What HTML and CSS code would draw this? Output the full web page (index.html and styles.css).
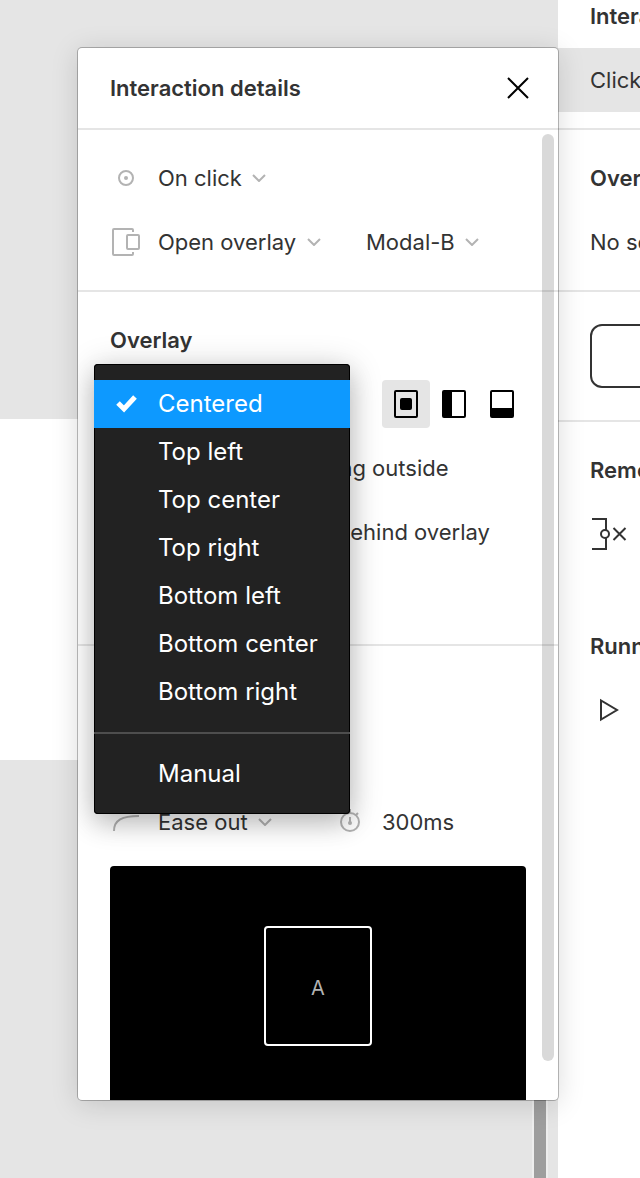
FILE: index.html
```html
<!DOCTYPE html>
<html lang="en">
<head>
    <meta charset="UTF-8">
    <meta name="viewport" content="width=device-width, initial-scale=1.0">
    <title>Interaction details</title>
    <link rel="stylesheet" href="styles.css">
</head>
<body>

<main class="canvas">
    <div class="frame"></div>
    <div class="canvas-track"><div class="canvas-thumb"></div></div>
</main>

<aside class="sidebar">
    <div class="sidebar-content">
        <section class="group group-first">
            <h2>Interactions</h2>
            <button type="button" class="interaction">Click</button>
        </section>
        <section class="group">
            <h2>Overflow behavior</h2>
            <div class="row"><select aria-label="Overflow behavior"><option>No scrolling</option></select></div>
        </section>
        <section class="group group-settings">
            <button type="button" class="settings">Show prototype settings</button>
        </section>
        <section class="group group-plain">
            <h2>Remove all interactions</h2>
            <div class="row">
                <button type="button" class="icon-button" aria-label="Remove">
                    <svg width="40" height="32" viewBox="0 0 40 32"><path d="M2 1h14v11M16 20v11H2M23.500 10l12 12M35.500 10l-12 12"/><circle cx="15" cy="16" r="4"/></svg>
                </button>
            </div>
        </section>
        <section class="group group-plain">
            <h2>Running your prototype</h2>
            <div class="row">
                <button type="button" class="icon-button" aria-label="Play">
                    <svg width="32" height="32" viewBox="0 0 32 32"><path d="M11 6.500v19L27 16z"/></svg>
                </button>
            </div>
        </section>
    </div>
</aside>

<div class="dialog" role="dialog" aria-labelledby="dialogTitle">
    <header class="dialog-header">
        <h1 id="dialogTitle">Interaction details</h1>
        <button type="button" class="close" aria-label="Close">
            <svg width="32" height="32" viewBox="0 0 32 32"><path d="M6 6l20 20M26 6L6 26"/></svg>
        </button>
    </header>

    <div class="dialog-body">
        <section class="group">
            <div class="row">
                <svg class="icon" width="32" height="32" viewBox="0 0 32 32"><circle cx="16" cy="16" r="7"/><circle class="dot" cx="16" cy="16" r="2"/></svg>
                <select aria-label="Trigger"><option>On click</option></select>
                <svg class="chevron" width="14" height="8" viewBox="0 0 14 8"><path d="M1 1l6 6 6-6"/></svg>
            </div>
            <div class="row split">
                <div class="field">
                    <svg class="icon" width="32" height="32" viewBox="0 0 32 32"><path d="M23 6V4a1 1 0 0 0-1-1H4a1 1 0 0 0-1 1v24a1 1 0 0 0 1 1h18a1 1 0 0 0 1-1v-2"/><rect x="17" y="9" width="12" height="14" rx="1"/></svg>
                    <select aria-label="Action"><option>Open overlay</option></select>
                    <svg class="chevron" width="14" height="8" viewBox="0 0 14 8"><path d="M1 1l6 6 6-6"/></svg>
                </div>
                <div class="field">
                    <select aria-label="Destination"><option>Modal-B</option></select>
                    <svg class="chevron" width="14" height="8" viewBox="0 0 14 8"><path d="M1 1l6 6 6-6"/></svg>
                </div>
            </div>
        </section>

        <section class="group">
            <h2>Overlay</h2>
            <div class="row positions">
                <button type="button" class="position selected" aria-label="Center">
                    <svg width="24" height="28" viewBox="0 0 24 28"><rect class="outline" x="1" y="1" width="22" height="26" rx="1"/><rect x="6" y="8" width="12" height="12" rx="2"/></svg>
                </button>
                <button type="button" class="position" aria-label="Left">
                    <svg width="24" height="28" viewBox="0 0 24 28"><rect class="outline" x="1" y="1" width="22" height="26" rx="1"/><path d="M1 1h9v26H1z"/></svg>
                </button>
                <button type="button" class="position" aria-label="Bottom">
                    <svg width="24" height="28" viewBox="0 0 24 28"><rect class="outline" x="1" y="1" width="22" height="26" rx="1"/><path d="M1 18h22v9H1z"/></svg>
                </button>
            </div>
            <div class="row">
                <input type="checkbox" id="closeOutside">
                <label for="closeOutside">Close when clicking outside</label>
            </div>
            <div class="row">
                <input type="checkbox" id="addBackground">
                <label for="addBackground">Add background behind overlay</label>
            </div>
            <div class="row"></div>

            <ul class="menu" role="listbox" aria-label="Position">
                <li role="option" aria-selected="true"><button type="button" class="active">
                    <svg width="24" height="24" viewBox="0 0 24 24"><path d="M4 11l6 6L21 5"/></svg>Centered</button></li>
                <li role="option"><button type="button">Top left</button></li>
                <li role="option"><button type="button">Top center</button></li>
                <li role="option"><button type="button">Top right</button></li>
                <li role="option"><button type="button">Bottom left</button></li>
                <li role="option"><button type="button">Bottom center</button></li>
                <li role="option"><button type="button">Bottom right</button></li>
                <li class="separator" role="separator"></li>
                <li role="option"><button type="button">Manual</button></li>
            </ul>
        </section>

        <section class="group">
            <h2>Animation</h2>
            <div class="row"></div>
            <div class="row split split-timing">
                <div class="field">
                    <svg class="icon" width="32" height="32" viewBox="0 0 32 32"><path d="M4 25C4 14 12 10 29 10"/></svg>
                    <select aria-label="Easing"><option>Ease out</option></select>
                    <svg class="chevron" width="14" height="8" viewBox="0 0 14 8"><path d="M1 1l6 6 6-6"/></svg>
                </div>
                <div class="field">
                    <svg class="icon" width="32" height="32" viewBox="0 0 32 32"><circle cx="16" cy="16" r="9"/><path d="M16 3v4M16 11v6M22 9l2-2"/><circle class="dot" cx="16" cy="17" r="2"/></svg>
                    <input type="text" class="duration" aria-label="Duration" value="300ms">
                </div>
            </div>
            <div class="preview"><div class="preview-box">A</div></div>
        </section>
    </div>
    <div class="scrollbar"></div>
</div>

</body>
</html>
```

FILE: styles.css
```css
* {
    box-sizing: border-box;
}

body {
    margin: 0;
    height: 100vh;
    display: flex;
    position: relative;
    overflow: hidden;
    font-family: Inter, "Liberation Sans", sans-serif;
    font-size: 22px;
    line-height: 32px;
    color: #333;
    background-color: #fff;
}

h1, h2 {
    margin: 0;
    font-size: 22px;
    font-weight: 600;
}

h2 {
    line-height: 64px;
    padding: 0 32px;
}

button, select, input {
    font: inherit;
    color: inherit;
    margin: 0;
    padding: 0;
    border: none;
    background: none;
}

select {
    appearance: none;
}

svg {
    display: block;
    flex: none;
    fill: none;
    stroke: currentColor;
    stroke-width: 2;
}

/* canvas behind the dialog */
.canvas {
    flex: 1;
    position: relative;
    display: flex;
    justify-content: flex-end;
    align-items: flex-end;
    background-color: #e5e5e5;
}

.frame {
    position: absolute;
    top: 419px;
    left: 0;
    width: 400px;
    height: 341px;
    background-color: #fff;
}

.canvas-track {
    width: 26px;
    height: 50%;
    padding-right: 10px;
    border-left: 1px solid #eee;
}

.canvas-thumb {
    height: 100%;
    border: 0 solid #eee;
    border-width: 0 2px 0 1px;
    background-color: #9e9e9e;
}

/* right sidebar */
.sidebar {
    flex: 0 0 82px;
    overflow: hidden;
}

.sidebar-content {
    width: 480px;
}

.group {
    padding: 16px 0;
    border-bottom: 2px solid #e5e5e5;
}

.group-first {
    margin-top: -16px;
    padding-top: 0;
}

.group-settings {
    padding: 32px;
}

.group-plain {
    border-bottom: none;
    margin-bottom: 16px;
}

.row {
    display: flex;
    align-items: center;
    gap: 16px;
    height: 64px;
    padding: 0 32px;
}

.interaction {
    display: block;
    width: 100%;
    height: 64px;
    padding: 0 32px;
    text-align: left;
    background-color: #e5e5e5;
}

.settings {
    display: block;
    width: 100%;
    height: 64px;
    border: 2px solid #333;
    border-radius: 12px;
}

/* dialog */
.dialog {
    position: absolute;
    top: 48px;
    right: 82px;
    bottom: 78px;
    left: 78px;
    display: flex;
    flex-direction: column;
    border-radius: 4px;
    background-color: #fff;
    box-shadow: 0 0 0 1px rgba(0, 0, 0, 0.25), 0 4px 28px rgba(0, 0, 0, 0.15);
}

.dialog-header {
    flex: none;
    display: flex;
    align-items: center;
    justify-content: space-between;
    height: 82px;
    padding: 0 24px 0 32px;
    border-bottom: 2px solid #e5e5e5;
}

.close {
    color: #000;
}

.dialog-body {
    flex: 1;
    min-height: 0;
    overflow: hidden;
    border-radius: 0 0 4px 4px;
}

.dialog .group {
    position: relative;
}

.field {
    display: flex;
    align-items: center;
    gap: 16px;
}

.split {
    display: grid;
    grid-template-columns: 256px 1fr;
    gap: 0;
}

.split-timing {
    grid-template-columns: 224px 1fr;
}

.icon {
    color: #b3b3b3;
}

.icon .dot {
    fill: currentColor;
    stroke: none;
}

.chevron {
    color: #b3b3b3;
    margin-left: -6px;
}

.duration {
    width: 120px;
}

.row input[type="checkbox"] {
    width: 24px;
    height: 24px;
    margin: 0 4px;
}

.positions {
    justify-content: flex-end;
    gap: 0;
}

.position {
    display: flex;
    align-items: center;
    justify-content: center;
    width: 48px;
    height: 48px;
    border-radius: 4px;
    color: #000;
}

.position.selected {
    background-color: #e5e5e5;
}

.position svg {
    fill: #000;
    stroke: none;
}

.position .outline {
    fill: none;
    stroke: #000;
}

.preview {
    display: flex;
    align-items: center;
    justify-content: center;
    height: 240px;
    margin: 12px 32px 0;
    border-radius: 4px;
    background-color: #000;
}

.preview-box {
    display: flex;
    align-items: center;
    justify-content: center;
    width: 108px;
    height: 120px;
    padding-top: 4px;
    border: 2px solid #fff;
    border-radius: 4px;
    font-size: 20px;
    color: #b3b3b3;
}

.scrollbar {
    position: absolute;
    top: 86px;
    right: 4px;
    bottom: 39px;
    width: 12px;
    border-radius: 6px;
    background-color: rgba(0, 0, 0, 0.15);
}

/* position menu */
.menu {
    position: absolute;
    top: 72px;
    left: 16px;
    z-index: 1;
    width: 256px;
    margin: 0;
    padding: 16px 0;
    list-style: none;
    font-size: 24px;
    color: #fff;
    border-radius: 4px;
    background-color: #222;
    box-shadow: inset 0 0 0 1px #000, 0 4px 34px rgba(0, 0, 0, 0.2), 0 10px 24px rgba(0, 0, 0, 0.15);
}

.menu button {
    display: flex;
    align-items: center;
    gap: 20px;
    width: 100%;
    height: 48px;
    padding-left: 64px;
}

.menu .active {
    padding-left: 20px;
    background-color: #0d99ff;
}

.menu svg {
    stroke-width: 5;
}

.separator {
    height: 2px;
    margin: 16px 0;
    background-color: #4e4e4e;
}
```
